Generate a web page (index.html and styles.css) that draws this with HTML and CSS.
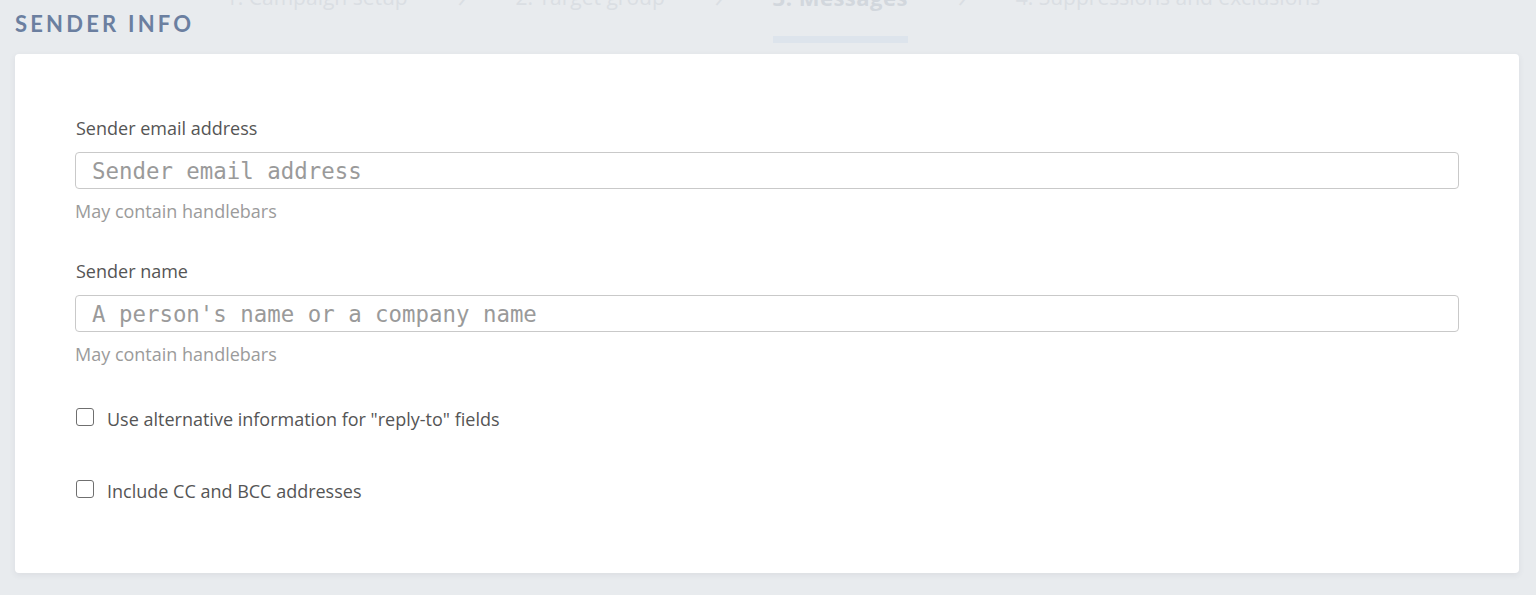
FILE: index.html
```html
<!DOCTYPE html>
<html lang="en">
<head>
<meta charset="utf-8">
<title>Sender info</title>
<link rel="stylesheet" href="styles.css">
</head>
<body>
<div class="stepper">
  <span class="step">1. Campaign setup</span>
  <span class="chev">&#x203A;</span>
  <span class="step">2. Target group</span>
  <span class="chev">&#x203A;</span>
  <span class="step active">3. Messages</span>
  <span class="chev">&#x203A;</span>
  <span class="step">4. Suppressions and exclusions</span>
</div>
<main class="page">
  <h2 class="section-title">SENDER INFO</h2>
  <section class="card">
    <div class="field">
      <label class="label" for="email">Sender email address</label>
      <input class="input" id="email" type="text" placeholder="Sender email address">
      <div class="help">May contain handlebars</div>
    </div>
    <div class="field">
      <label class="label" for="name">Sender name</label>
      <input class="input" id="name" type="text" placeholder="A person's name or a company name">
      <div class="help">May contain handlebars</div>
    </div>
    <label class="check">
      <span class="box"></span>
      <span>Use alternative information for "reply-to" fields</span>
    </label>
    <label class="check">
      <span class="box"></span>
      <span>Include CC and BCC addresses</span>
    </label>
  </section>
</main>
</body>
</html>
```

FILE: styles.css
```css
html, body {
  margin: 0;
  padding: 0;
}
body {
  background: #e8ebee;
  font-family: "Open Sans", "Noto Sans", sans-serif;
  color: #555;
  height: 595px;
  overflow: hidden;
  position: relative;
}
.stepper {
  position: absolute;
  top: -18px;
  left: 0;
  right: 0;
  height: 62px;
  padding-left: 10px;
  display: flex;
  justify-content: center;
  align-items: flex-start;
  gap: 50px;
  font-family: "Open Sans", sans-serif;
  font-size: 21px;
  color: #dadee3;
  pointer-events: none;
}
.step {
  position: relative;
  line-height: 30px;
}
.step.active {
  font-weight: 700;
  font-size: 22px;
  letter-spacing: 0.5px;
  color: #d2d7dd;
}
.step.active::after {
  content: "";
  position: absolute;
  left: 0;
  right: 0;
  top: 54px;
  height: 7px;
  background: #dde4ec;
}
.chev {
  line-height: 30px;
  font-size: 26px;
}
.page {
  position: relative;
  padding: 10px 17px 0 15px;
}
.section-title {
  margin: 0 0 16px 0;
  font-family: "Lato", "Open Sans", sans-serif;
  font-weight: 700;
  font-size: 22px;
  letter-spacing: 3.2px;
  line-height: 28px;
  color: #6b7fa0;
}
.card {
  background: #fff;
  border-radius: 4px;
  box-shadow: 0 2px 6px rgba(60, 70, 90, 0.08);
  padding: 62px 60px 44px 60px;
  height: 519px;
  box-sizing: border-box;
}
.field {
  display: flex;
  flex-direction: column;
  margin-bottom: 36px;
}
.label {
  font-size: 18px;
  line-height: 24px;
  color: #555;
  margin-bottom: 12px;
  padding-left: 1px;
}
.input {
  height: 37px;
  box-sizing: border-box;
  border: 1px solid #c9c9c9;
  border-radius: 4px;
  padding: 0 16px;
  font-family: "DejaVu Sans Mono", monospace;
  font-size: 22.4px;
  color: #333;
  outline: none;
  margin: 0;
}
.input::placeholder {
  color: #9a9a9a;
}
.help {
  margin-top: 10px;
  font-size: 18px;
  line-height: 24px;
  color: #9b9b9b;
}
.check {
  display: flex;
  align-items: center;
  gap: 13px;
  font-size: 18px;
  line-height: 24px;
  color: #555;
  margin-top: 41px;
  padding-left: 1px;
}
.check + .check {
  margin-top: 48px;
}
.box {
  width: 18px;
  height: 18px;
  box-sizing: border-box;
  border: 1.5px solid #6f6f6f;
  border-radius: 3px;
  flex: none;
  margin-top: -4px;
}
```
